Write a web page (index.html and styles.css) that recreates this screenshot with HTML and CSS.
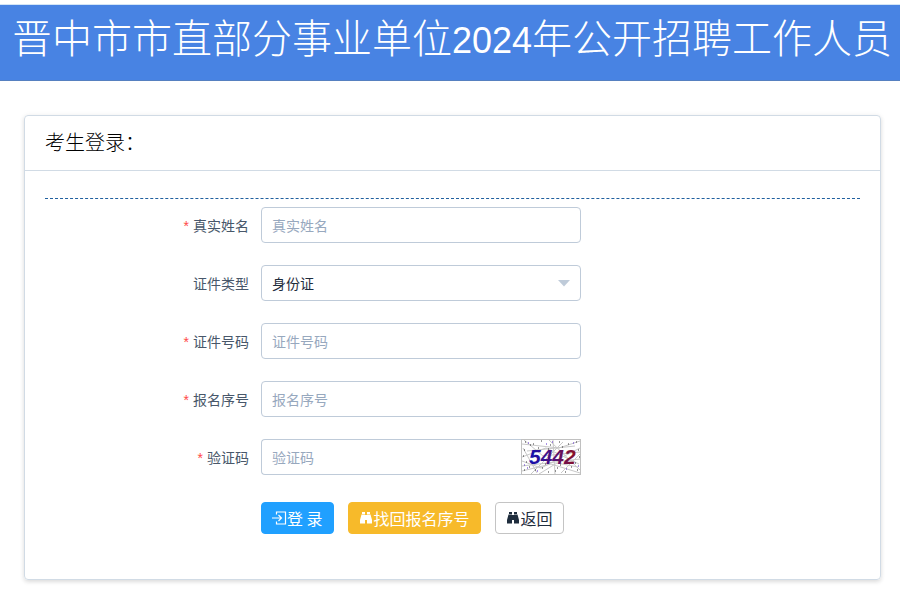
FILE: index.html
```html
<!DOCTYPE html>
<html lang="zh-CN">
<head>
<meta charset="utf-8">
<title>考生登录</title>
<link rel="stylesheet" href="styles.css">
</head>
<body>
<header class="banner">
  <h1 class="banner-title">晋中市市直部分事业单位<span class="year">2024</span>年公开招聘工作人员</h1>
</header>
<main class="card">
  <h2 class="card-head">考生登录：</h2>
  <form class="card-body">
    <div class="row">
      <label class="label required" for="name">真实姓名</label>
      <input class="field" id="name" type="text" placeholder="真实姓名">
    </div>
    <div class="row">
      <label class="label" for="type">证件类型</label>
      <div class="select-wrap">
        <select class="field" id="type"><option>身份证</option></select>
        <svg class="caret" width="12" height="7" viewBox="0 0 12 7" aria-hidden="true"><path d="M0 0h12L6 6.500z" fill="#bfcbd9"/></svg>
      </div>
    </div>
    <div class="row">
      <label class="label required" for="idno">证件号码</label>
      <input class="field" id="idno" type="text" placeholder="证件号码">
    </div>
    <div class="row">
      <label class="label required" for="serial">报名序号</label>
      <input class="field" id="serial" type="text" placeholder="报名序号">
    </div>
    <div class="row">
      <label class="label required" for="code">验证码</label>
      <div class="code-group">
        <input class="field code-field" id="code" type="text" placeholder="验证码">
        <svg class="captcha" width="60" height="36" viewBox="0 0 60 36">
          <defs><linearGradient id="ink" x1="0" x2="1"><stop offset="0" stop-color="#1010b0"/><stop offset=".5" stop-color="#50107c"/><stop offset="1" stop-color="#8c1024"/></linearGradient></defs>
          <rect x=".5" y=".5" width="59" height="35" fill="#fff" stroke="#c0c0c0"/>
          <g fill="none" stroke="#c8c8c8">
            <path d="M1 5L38 9 59 2M1 32L30 25 59 34M3 1L22 17 59 13M1 18L25 9 58 25M10 35L42 3M28 1L59 31M1 27L59 20M18 35L36 24 57 28M6 12L54 7M32 1L34 35M1 22L20 29 59 9M40 34L59 15M2 9L16 34"/>
          </g>
          <path d="M4 3h1M12 5h1M20 2h1M29 6h1M38 3h1M47 5h1M55 3h1M3 11h1M57 11h1M27 10h1M2 17h1M58 18h1M5 23h1M8 28h1M3 31h1M14 31h1M21 29h1M27 33h1M36 29h1M44 33h1M50 28h1M56 31h1M17 9h1M41 8h1M24 25h1M39 26h1M54 24h1M9 6h1M34 32h1" stroke="#333" fill="none"/>
          <path d="M7 4h1M16 32h1M3 26h1M6 29h1M31 3h1M45 30h1M52 4h1M25 5h1M57 27h1" stroke="#5522cc" fill="none"/>
          <text class="captcha-text" x="8" y="25" fill="url(#ink)">5442</text>
        </svg>
      </div>
    </div>
    <div class="actions">
      <button class="btn btn-primary" type="button"><svg width="15" height="14" viewBox="0 0 15 14" aria-hidden="true"><path d="M4.500 3.500V1h9v12h-9v-2.500M0 7h9M6.500 4L9.500 7l-3 3" fill="none" stroke="currentColor" stroke-width="1.200"/></svg>登 录</button>
      <button class="btn btn-warning" type="button"><svg width="15" height="14" viewBox="0 0 15 14" aria-hidden="true"><path d="M3 1h3v2H3zM8 1h3v2H8zM2.500 3.500H6V12.500H1V9zM8 3.500h3.500L13 9v3.500H8zM6 4h2v5H6z" fill="currentColor"/></svg>找回报名序号</button>
      <button class="btn" type="button"><svg width="15" height="14" viewBox="0 0 15 14" aria-hidden="true"><path d="M3 1h3v2H3zM8 1h3v2H8zM2.500 3.500H6V12.500H1V9zM8 3.500h3.500L13 9v3.500H8zM6 4h2v5H6z" fill="currentColor"/></svg>返回</button>
    </div>
  </form>
</main>
</body>
</html>
```
FILE: styles.css
```css
* { box-sizing: border-box; }

body {
  margin: 0;
  padding-top: 4px;
  background: #fff;
  color: #1f2d3d;
  font-family: "Microsoft YaHei", "Noto Sans CJK SC", sans-serif;
  font-size: 14px;
}

.banner {
  padding: 3px 0 16px 4px;
  background: #4883e3;
  border-top: 1px solid #d3e5f6;
  border-bottom: 1px solid #5680c0;
  color: #fff;
  text-align: center;
}

.banner-title {
  margin: 0;
  font-family: KaiTi, "Noto Sans CJK SC", sans-serif;
  font-size: 40px;
  font-weight: 300;
  line-height: 56px;
  white-space: nowrap;
}

.year {
  font-family: "Liberation Sans", sans-serif;
  font-size: 36px;
  font-weight: 400;
  line-height: 36px;
}

.card {
  margin: 34px 19px 33px 24px;
  border: 1px solid #d1dbe5;
  border-radius: 4px;
  box-shadow: 0 2px 4px rgba(0, 0, 0, .12), 0 0 6px rgba(0, 0, 0, .04);
}

.card-head {
  margin: 0;
  padding: 11px 20px 13px;
  border-bottom: 1px solid #d1dbe5;
  color: #000;
  font-size: 20px;
  font-weight: 300;
  line-height: 30px;
}

.card-body {
  margin: 27px 20px 45px;
  padding-top: 8px;
  border-top: 1px dashed #20609f;
}

.row {
  display: grid;
  grid-template-columns: 204px 320px;
  column-gap: 12px;
  align-items: center;
  margin-bottom: 22px;
}

.label {
  color: #48576a;
  line-height: 20px;
  text-align: right;
}

.required::before {
  content: "*";
  margin-right: 4px;
  color: #ff4949;
  font-family: "Liberation Sans", sans-serif;
}

.field {
  display: block;
  width: 100%;
  height: 36px;
  margin: 0;
  padding: 0 10px;
  border: 1px solid #bfcbd9;
  border-radius: 4px;
  background: #fff;
  color: #1f2d3d;
  font: inherit;
  appearance: none;
}

.field::placeholder { color: #97a8be; opacity: 1; }

.select-wrap { position: relative; }

.caret {
  position: absolute;
  top: 15px;
  right: 11px;
  pointer-events: none;
}

.code-group { display: flex; }

.code-field {
  flex: 1;
  min-width: 0;
  border-right: 0;
  border-radius: 4px 0 0 4px;
}

.captcha { display: block; }

.captcha-text {
  font: italic bold 21px "Liberation Sans", sans-serif;
}

.actions {
  display: flex;
  gap: 14px;
  padding: 5px 0 0 216px;
}

.btn {
  display: flex;
  align-items: center;
  height: 32px;
  padding: 0 10px;
  border: 1px solid #c4c4c4;
  border-radius: 4px;
  background: #fff;
  color: #1f2d3d;
  font: inherit;
  font-size: 16px;
  line-height: 24px;
  white-space: nowrap;
}

.btn-primary { background: #20a0ff; border-color: #20a0ff; color: #fff; }

.btn-warning { background: #f7ba2a; border-color: #f7ba2a; color: #fff; }
```
